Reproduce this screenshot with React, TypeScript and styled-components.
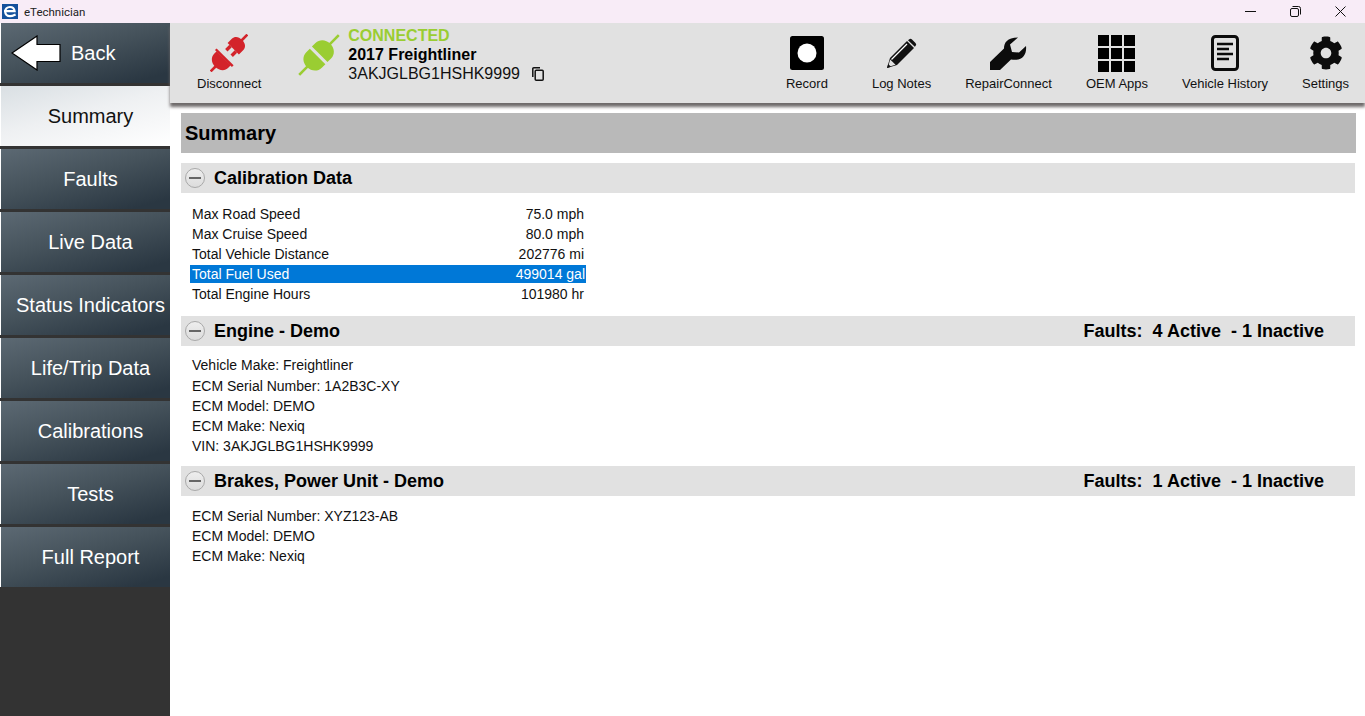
import React from "react";
import styled, { createGlobalStyle } from "styled-components";
import { FaCog } from "react-icons/fa";

const Global = createGlobalStyle`
  html, body { margin: 0; padding: 0; height: 100%; background: #fff; overflow: hidden; }
  #root { height: 100%; }
  * { box-sizing: border-box; }
`;

const Page = styled.div`
  display: flex;
  flex-direction: column;
  width: 100%;
  height: 100vh;
  font-family: "Liberation Sans", Arial, sans-serif;
  color: #000;
`;
const TitleBar = styled.header`
  display: flex;
  align-items: center;
  flex: 0 0 23px;
  height: 23px;
  background: #f8ecf7;
  padding-left: 2px;
`;
const AppName = styled.span`
  margin-left: 6px;
  font-family: Roboto, sans-serif;
  font-size: 11.5px;
  color: #222;
`;
const WindowControls = styled.div`
  display: flex;
  margin-left: auto;
  padding-right: 2px;
  align-items: center;
`;
const WindowButton = styled.button`
  width: 45px;
  height: 23px;
  padding: 0;
  border: 0;
  background: none;
  display: flex;
  align-items: center;
  justify-content: center;
  color: #111;
`;
const Body = styled.div`
  display: flex;
  flex: 1;
  min-height: 0;
`;
const Sidebar = styled.nav`
  display: flex;
  flex-direction: column;
  gap: 3px;
  flex: 0 0 170px;
  background: #333;
`;
const NavButton = styled.div<{ $active?: boolean }>`
  display: flex;
  align-items: center;
  justify-content: center;
  height: 60px;
  padding-left: 10px;
  font-size: 20px;
  white-space: nowrap;
  border-left: 1px solid #fff;
  color: ${(p) => (p.$active ? "#111" : "#fff")};
  background: ${(p) =>
    p.$active
      ? "linear-gradient(165deg, #d9dfe3 0%, #eef0f2 45%, #ffffff 100%)"
      : "linear-gradient(165deg, #5c6973 0%, #45525b 45%, #2a3742 90%)"};
`;
const BackButton = styled(NavButton)`
  justify-content: flex-start;
  gap: 10px;
`;
const Main = styled.main`
  display: flex;
  flex-direction: column;
  flex: 1;
  min-width: 0;
`;
const Toolbar = styled.div`
  display: flex;
  align-items: stretch;
  height: 80px;
  flex: 0 0 80px;
  background: #e1e1e1;
  box-shadow: 0 4px 3px #6f6b6b;
  padding-right: 16px;
  position: relative;
`;
const ToolGroup = styled.div`
  display: flex;
  gap: 34px;
  margin-left: auto;
`;
const Tool = styled.div<{ $spaced?: boolean }>`
  display: flex;
  flex-direction: column;
  align-items: center;
  justify-content: flex-end;
  padding-bottom: 11px;
  font-size: 13px;
  line-height: 16px;
  color: #111;
  white-space: nowrap;
  margin-right: ${(p) => (p.$spaced ? "10px" : "0")};
`;
const DisconnectTool = styled(Tool)`
  margin-left: 27px;
`;
const IconSlot = styled.div`
  height: 40px;
  width: 100%;
  display: flex;
  align-items: center;
  justify-content: center;
  margin-bottom: 3px;
  color: #0c0c0c;
`;
const Connection = styled.div`
  display: flex;
  align-items: flex-start;
  margin-left: 36px;
  padding-top: 3px;
`;
const PlugWrap = styled.div`
  margin-top: 8px;
  margin-right: 8px;
  margin-left: 1px;
  display: flex;
`;
const ConnInfo = styled.div`
  display: flex;
  flex-direction: column;
  font-size: 16px;
  line-height: 19px;
`;
const ConnStatus = styled.div`
  font-weight: 700;
  color: #9acd32;
`;
const VehicleName = styled.div`
  font-weight: 700;
  color: #000;
`;
const VinRow = styled.div`
  display: flex;
  align-items: center;
  gap: 12px;
  color: #111;
`;
const Content = styled.div`
  flex: 1;
  padding: 10px 9px 0 11px;
  display: flex;
  flex-direction: column;
`;
const PageTitle = styled.h1`
  margin: 0 0 10px;
  height: 40px;
  line-height: 40px;
  padding-left: 4px;
  font-size: 20px;
  font-weight: 700;
  background: #b9b9b9;
`;
const SectionHeader = styled.div`
  display: flex;
  align-items: center;
  height: 30px;
  margin-right: 1px;
  padding: 0 31px 0 4px;
  background: #e1e1e1;
  font-size: 18px;
  font-weight: 700;
`;
const Collapse = styled.span`
  position: relative;
  flex: 0 0 20px;
  width: 20px;
  height: 20px;
  margin-right: 9px;
  border-radius: 50%;
  border: 1px solid #a9a9a9;
  background: linear-gradient(#eeeeee, #dcdcdc);
  &::after {
    content: "";
    position: absolute;
    left: 3px;
    right: 3px;
    top: 8px;
    height: 2px;
    background: #666;
  }
`;
const FaultSummary = styled.span`
  margin-left: auto;
  white-space: pre;
`;
const CalBlock = styled.div`
  display: flex;
  flex-direction: column;
  gap: 2px;
  width: 396px;
  margin: 12px 0 13px 9px;
`;
const CalRow = styled.div<{ $selected?: boolean }>`
  display: flex;
  justify-content: space-between;
  height: 18px;
  line-height: 18px;
  padding: 0 ${(p) => (p.$selected ? "1px" : "2px")} 0 2px;
  font-size: 14px;
  color: ${(p) => (p.$selected ? "#fff" : "#111")};
  background: ${(p) => (p.$selected ? "#0078d7" : "transparent")};
`;
const InfoBlock = styled.div<{ $top: number; $bottom: number }>`
  margin: ${(p) => p.$top}px 0 ${(p) => p.$bottom}px 11px;
  font-size: 14px;
  line-height: 20.2px;
  color: #111;
`;

const Logo = () => (
  <svg width="16" height="15" viewBox="0 0 16 15">
    <rect width="16" height="15" fill="#14509c" />
    <path d="M2 7.2H12.6C12.3 4.6 10.4 3 7.9 3C5.2 3 3.2 5 3.2 7.6C3.2 10.2 5.2 12.2 8 12.2C9.6 12.2 11 11.6 13.6 10.4" fill="none" stroke="#fff" strokeWidth="2.2" />
  </svg>
);
const BackArrow = () => (
  <svg width="50" height="36" viewBox="0 0 50 36">
    <path d="M1 18L26 1V9.5H49V26.5H26V35Z" fill="#fff" stroke="#000" strokeWidth="1.2" />
  </svg>
);
const Disconnect = () => (
  <svg width="38" height="38" viewBox="-19 -19 38 38">
    <g transform="rotate(45)" fill="#d3232a">
      <rect x="-1.3" y="-26" width="2.6" height="9" />
      <path d="M-8 -6V-12C-8 -16 -5 -18.5 0 -18.5C5 -18.5 8 -16 8 -12V-6Z" />
      <rect x="-5.5" y="-6" width="3.4" height="6" />
      <rect x="2.1" y="-6" width="3.4" height="6" />
      <rect x="-12" y="5.5" width="24" height="2.4" />
      <path d="M-10 7.5H10V11C10 16 5.5 19.5 0 19.5C-5.5 19.5 -10 16 -10 11Z" />
      <rect x="-1.3" y="18" width="2.6" height="8" />
    </g>
  </svg>
);
const Plug = () => (
  <svg width="42" height="42" viewBox="-21 -21 42 42">
    <g transform="rotate(45)" fill="#9acd32">
      <rect x="-1.3" y="-28" width="2.6" height="14" />
      <path d="M-11 -1V-6C-11 -12 -6 -16 0 -16C6 -16 11 -12 11 -6V-1Z" />
      <path d="M-11 2V7C-11 13 -6 17 0 17C6 17 11 13 11 7V2Z" />
      <rect x="-1.3" y="15" width="2.6" height="13" />
    </g>
  </svg>
);
const CopyIcon = () => (
  <svg width="12" height="14" viewBox="0 0 12 14" fill="none" stroke="#111" strokeWidth="1.5">
    <path d="M0.8 10V1.8Q0.8 0.8 1.8 0.8H8" />
    <rect x="3.2" y="3.2" width="8" height="10" rx="1" />
  </svg>
);
const RecordIcon = () => (
  <svg width="34" height="34" viewBox="0 0 34 34">
    <rect width="34" height="34" rx="2.5" fill="#000" />
    <circle cx="17" cy="17" r="9.5" fill="#fff" />
  </svg>
);
const PencilIcon = () => (
  <svg width="30" height="30" viewBox="0 0 30 30">
    <path d="M0 30L3 20L20 3L27 10L10 27Z" fill="#111" />
    <path d="M22 1.5Q23.5 0 25 1.5L28.5 5Q30 6.5 28.5 8L27.8 8.7L21 2.3Z" fill="#111" />
    <path d="M4.5 21.5L20 6" stroke="#fff" strokeWidth="1.2" />
    <path d="M3.2 21.5L8.5 26.8L1 29Z" fill="#e1e1e1" />
    <path d="M0 30L1.2 26L4 28.8Z" fill="#111" />
  </svg>
);
const WrenchIcon = () => (
  <svg width="37" height="33" viewBox="0 0 37 33">
    <path d="M0 25L14 11.5C14 6 17 0.5 28 0.5L20 7.5L22 15L29 15.5L36 9C37 18 32 24.5 21 22.5L10 33H0Z" fill="#0c0c0c" />
  </svg>
);
const GridIcon = () => (
  <svg width="37" height="37" viewBox="0 0 37 37" fill="#000">
    {[0, 13, 26].flatMap((y) =>
      [0, 13, 26].map((x) => <rect key={`${x}-${y}`} x={x} y={y} width="11" height="11" />)
    )}
  </svg>
);
const DocIcon = () => (
  <svg width="28" height="36" viewBox="0 0 28 36" fill="none" stroke="#0c0c0c">
    <rect x="1.5" y="1.5" width="25" height="33" rx="3" strokeWidth="3" />
    <path d="M6 9H22M6 14H18M6 19H22M6 24H18" strokeWidth="2.4" />
  </svg>
);

const navItems = ["Faults", "Live Data", "Status Indicators", "Life/Trip Data", "Calibrations", "Tests", "Full Report"];
const calibration = [
  ["Max Road Speed", "75.0 mph"],
  ["Max Cruise Speed", "80.0 mph"],
  ["Total Vehicle Distance", "202776 mi"],
  ["Total Fuel Used", "499014 gal"],
  ["Total Engine Hours", "101980 hr"],
];
const tools: [string, React.ReactNode][] = [
  ["Log Notes", <PencilIcon />],
  ["RepairConnect", <WrenchIcon />],
  ["OEM Apps", <GridIcon />],
  ["Vehicle History", <DocIcon />],
  ["Settings", <FaCog size={34} />],
];

export default function App() {
  return (
    <Page>
      <Global />
      <TitleBar>
        <Logo />
        <AppName>eTechnician</AppName>
        <WindowControls>
          <WindowButton aria-label="Minimize">
            <svg width="11" height="11" viewBox="0 0 11 11"><path d="M0 5.5H11" stroke="#111" /></svg>
          </WindowButton>
          <WindowButton aria-label="Restore">
            <svg width="11" height="11" viewBox="0 0 11 11" fill="none" stroke="#111"><rect x="0.5" y="2.5" width="8" height="8" rx="1.5" /><path d="M2.5 0.5H8.5Q10.5 0.5 10.5 2.5V8.5" /></svg>
          </WindowButton>
          <WindowButton aria-label="Close">
            <svg width="11" height="11" viewBox="0 0 11 11"><path d="M0.5 0.5L10.5 10.5M10.5 0.5L0.5 10.5" stroke="#111" /></svg>
          </WindowButton>
        </WindowControls>
      </TitleBar>
      <Body>
        <Sidebar>
          <BackButton><BackArrow />Back</BackButton>
          <NavButton $active>Summary</NavButton>
          {navItems.map((n) => <NavButton key={n}>{n}</NavButton>)}
        </Sidebar>
        <Main>
          <Toolbar>
            <DisconnectTool>
              <IconSlot><Disconnect /></IconSlot>
              Disconnect
            </DisconnectTool>
            <Connection>
              <PlugWrap><Plug /></PlugWrap>
              <ConnInfo>
                <ConnStatus>CONNECTED</ConnStatus>
                <VehicleName>2017 Freightliner</VehicleName>
                <VinRow>3AKJGLBG1HSHK9999<CopyIcon /></VinRow>
              </ConnInfo>
            </Connection>
            <ToolGroup>
              <Tool $spaced>
                <IconSlot><RecordIcon /></IconSlot>
                Record
              </Tool>
              {tools.map(([label, icon]) => (
                <Tool key={label}>
                  <IconSlot>{icon}</IconSlot>
                  {label}
                </Tool>
              ))}
            </ToolGroup>
          </Toolbar>
          <Content>
            <PageTitle>Summary</PageTitle>
            <SectionHeader><Collapse />Calibration Data</SectionHeader>
            <CalBlock>
              {calibration.map(([k, v]) => (
                <CalRow key={k} $selected={k === "Total Fuel Used"}><span>{k}</span><span>{v}</span></CalRow>
              ))}
            </CalBlock>
            <SectionHeader>
              <Collapse />Engine - Demo
              <FaultSummary>{"Faults:  4 Active  - 1 Inactive"}</FaultSummary>
            </SectionHeader>
            <InfoBlock $top={9.4} $bottom={9.6}>
              <div>Vehicle Make: Freightliner</div>
              <div>ECM Serial Number: 1A2B3C-XY</div>
              <div>ECM Model: DEMO</div>
              <div>ECM Make: Nexiq</div>
              <div>VIN: 3AKJGLBG1HSHK9999</div>
            </InfoBlock>
            <SectionHeader>
              <Collapse />Brakes, Power Unit - Demo
              <FaultSummary>{"Faults:  1 Active  - 1 Inactive"}</FaultSummary>
            </SectionHeader>
            <InfoBlock $top={10} $bottom={0}>
              <div>ECM Serial Number: XYZ123-AB</div>
              <div>ECM Model: DEMO</div>
              <div>ECM Make: Nexiq</div>
            </InfoBlock>
          </Content>
        </Main>
      </Body>
    </Page>
  );
}
